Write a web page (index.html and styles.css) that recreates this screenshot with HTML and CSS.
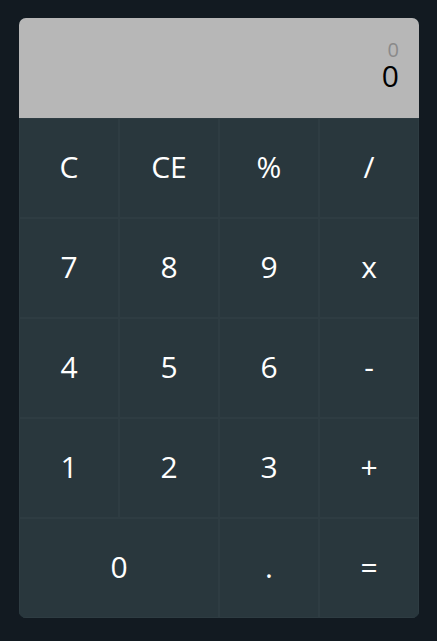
FILE: index.html
```html
<!DOCTYPE html>
<html>
<head>
<meta charset="utf-8">
<link rel="stylesheet" href="styles.css">
</head>
<body>
<div class="calc">
  <div class="display">
    <div class="prev">0</div>
    <div class="cur">0</div>
  </div>
  <div class="keys">
    <button class="key">C</button>
    <button class="key">CE</button>
    <button class="key">%</button>
    <button class="key">/</button>
    <button class="key">7</button>
    <button class="key">8</button>
    <button class="key">9</button>
    <button class="key">x</button>
    <button class="key">4</button>
    <button class="key">5</button>
    <button class="key">6</button>
    <button class="key">-</button>
    <button class="key">1</button>
    <button class="key">2</button>
    <button class="key">3</button>
    <button class="key">+</button>
    <button class="key wide">0</button>
    <button class="key">.</button>
    <button class="key">=</button>
  </div>
</div>
</body>
</html>
```
FILE: styles.css
```css
html, body {
  margin: 0;
  padding: 0;
  background: #121a21;
  height: 100%;
}
body {
  padding: 18px 0 0 19px;
  box-sizing: border-box;
  font-family: "Open Sans", "Liberation Sans", sans-serif;
}
.calc {
  width: 400px;
  border-radius: 7px;
  overflow: hidden;
  background: #29373d;
}
.display {
  height: 100px;
  background: #b7b7b7;
  display: flex;
  flex-direction: column;
  align-items: flex-end;
  justify-content: flex-start;
  padding: 21px 20px 0 0;
  box-sizing: border-box;
}
.prev {
  font-size: 20px;
  line-height: 22px;
  color: #8a8a8a;
}
.cur {
  font-size: 30px;
  line-height: 30px;
  color: #000;
}
.keys {
  display: grid;
  grid-template-columns: repeat(4, 100px);
  grid-auto-rows: 100px;
}
.key {
  background: #29373d;
  border: 1px solid #2e3c42;
  color: #fff;
  font-family: "Open Sans", "Liberation Sans", sans-serif;
  font-size: 30px;
  padding: 0 0 3px 0;
  margin: 0;
  display: flex;
  align-items: center;
  justify-content: center;
}
.wide {
  grid-column: span 2;
}
```
